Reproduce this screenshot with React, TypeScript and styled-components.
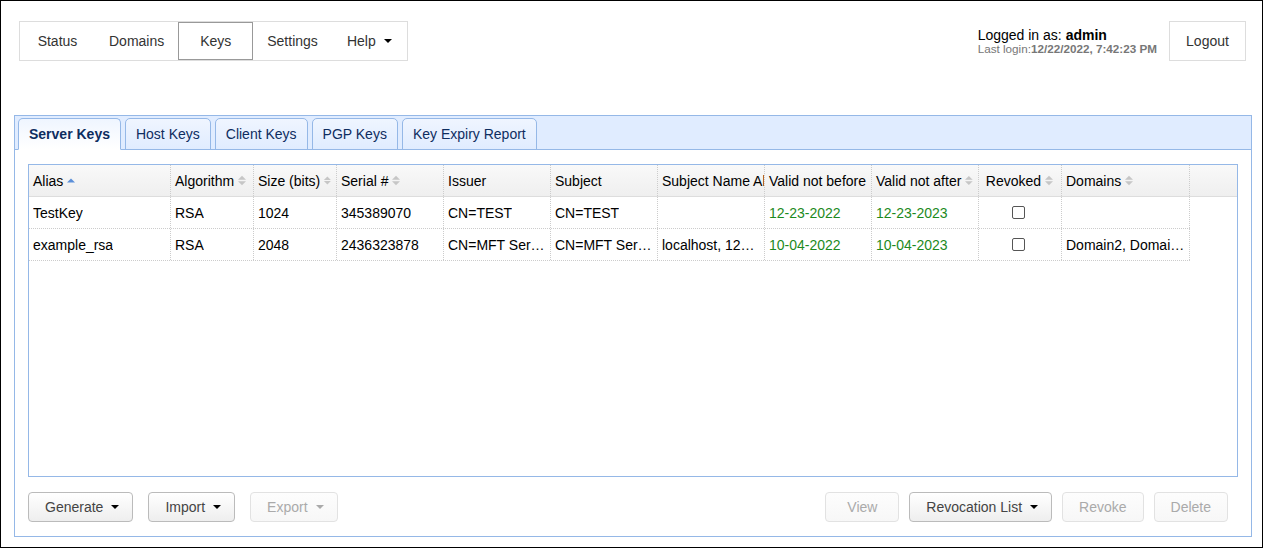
import React from "react";
import styled, { createGlobalStyle } from "styled-components";

const GlobalStyle = createGlobalStyle`
  html, body {
    margin: 0;
    padding: 0;
    background: #fff;
  }
  body {
    font-family: "Liberation Sans", Arial, sans-serif;
    font-size: 14px;
    color: #000;
  }
  * { box-sizing: border-box; }
`;

const Frame = styled.div`
  width: 1263px;
  height: 548px;
  border: 1px solid #000;
  display: flex;
  flex-direction: column;
`;

const TopBar = styled.div`
  display: flex;
  justify-content: space-between;
  align-items: center;
  padding: 20px 16px 0 18px;
  margin-bottom: 54px;
`;

const Nav = styled.nav`
  display: flex;
  height: 40px;
  border: 1px solid #ddd;
`;

const NavItem = styled.a<{ $active?: boolean }>`
  display: flex;
  align-items: center;
  justify-content: center;
  min-width: 75px;
  padding: 0 13px;
  color: #333;
  text-decoration: none;
  cursor: pointer;
  border: 1px solid ${(p) => (p.$active ? "#999" : "transparent")};
  margin: ${(p) => (p.$active ? "0" : "-1px 0")};
  height: ${(p) => (p.$active ? "38px" : "40px")};
`;

const Caret = styled.span<{ $color?: string }>`
  display: inline-block;
  width: 0;
  height: 0;
  margin-left: 8px;
  border-left: 4px solid transparent;
  border-right: 4px solid transparent;
  border-top: 4px solid ${(p) => p.$color || "#000"};
  vertical-align: middle;
`;

const UserBox = styled.div`
  display: flex;
  align-items: center;
  gap: 12px;
`;

const UserInfo = styled.div`
  display: flex;
  flex-direction: column;
  line-height: 14px;
`;

const LoggedIn = styled.div`
  font-size: 14px;
  color: #000;
  b { font-weight: bold; }
`;

const LastLogin = styled.div`
  font-size: 11.7px;
  color: #777;
  line-height: 13px;
  b { font-weight: bold; }
`;

const PlainButton = styled.button`
  height: 40px;
  width: 77px;
  border: 1px solid #ddd;
  background: #fff;
  font-family: inherit;
  font-size: 14px;
  color: #333;
  cursor: pointer;
`;

const Panel = styled.div`
  margin: 0 10px 10px 13px;
  height: 422px;
  border: 1px solid #95b8e7;
  display: flex;
  flex-direction: column;
`;

const TabStrip = styled.div`
  height: 34px;
  background: #e0ecff;
  border-bottom: 1px solid #95b8e7;
  padding: 2px 0 0 3px;
  display: flex;
  align-items: flex-start;
  gap: 4px;
`;

const Tab = styled.div<{ $active?: boolean }>`
  position: relative;
  height: 32px;
  padding: 0 10px;
  display: flex;
  align-items: center;
  border: 1px solid #95b8e7;
  border-radius: 5px 5px 0 0;
  color: #0e2d5f;
  font-weight: ${(p) => (p.$active ? "bold" : "normal")};
  background: ${(p) =>
    p.$active
      ? "linear-gradient(to bottom, #eff5ff 0, #ffffff 100%)"
      : "linear-gradient(to bottom, #eff5ff 0, #e0ecff 100%)"};
  border-bottom-color: ${(p) => (p.$active ? "#fff" : "#95b8e7")};
`;

const PanelBody = styled.div`
  flex: 1;
  background: #fff;
  padding: 14px 13px;
  display: flex;
  flex-direction: column;
`;

const GridBox = styled.div`
  height: 313px;
  border: 1px solid #95b8e7;
  overflow: hidden;
`;

const COLS = "142px 83px 83px 107px 107px 107px 107px 107px 107px 83px 128px";

const HeadRow = styled.div`
  display: grid;
  grid-template-columns: ${COLS};
  height: 32px;
  background: linear-gradient(to bottom, #f9f9f9 0, #efefef 100%);
  border-bottom: 1px solid #ddd;
`;

const HeadCell = styled.div<{ $center?: boolean }>`
  display: flex;
  align-items: center;
  justify-content: ${(p) => (p.$center ? "center" : "flex-start")};
  padding: 0 4px;
  border-right: 1px dotted #ccc;
  white-space: nowrap;
  overflow: hidden;
  color: #000;
`;

const Row = styled.div`
  display: grid;
  grid-template-columns: ${COLS};
  width: 1161px;
  height: 32px;
  border-bottom: 1px dotted #ccc;
`;

const Cell = styled.div<{ $color?: string; $center?: boolean }>`
  display: flex;
  align-items: center;
  justify-content: ${(p) => (p.$center ? "center" : "flex-start")};
  padding: 0 4px;
  border-right: 1px dotted #ccc;
  color: ${(p) => p.$color || "#000"};
  min-width: 0;
  span {
    white-space: nowrap;
    overflow: hidden;
    text-overflow: ellipsis;
  }
`;

const Check = styled.span`
  display: inline-block;
  width: 13px;
  height: 13px;
  border: 1px solid #555;
  border-radius: 2px;
  background: #fff;
  margin-left: -4px;
`;

const Toolbar = styled.div`
  margin-top: 15px;
  margin-right: 10px;
  display: flex;
  justify-content: space-between;
`;

const Group = styled.div<{ $gap: number }>`
  display: flex;
  gap: ${(p) => p.$gap}px;
`;

const Btn = styled.button<{ $disabled?: boolean; $menu?: boolean }>`
  height: 30px;
  min-width: 74px;
  padding: ${(p) => (p.$menu ? "0 13px 0 16px" : "0 16px")};
  display: flex;
  align-items: center;
  justify-content: center;
  font-family: inherit;
  font-size: 14px;
  border-radius: 4px;
  cursor: ${(p) => (p.$disabled ? "default" : "pointer")};
  color: ${(p) => (p.$disabled ? "#aaa" : "#444")};
  border: 1px solid ${(p) => (p.$disabled ? "#e2e2e2" : "#bbb")};
  background: ${(p) =>
    p.$disabled
      ? "linear-gradient(to bottom, #fdfdfd 0, #f7f7f7 100%)"
      : "linear-gradient(to bottom, #ffffff 0, #eeeeee 100%)"};
`;

function SortIcon({ dir }: { dir?: "asc" }) {
  if (dir === "asc") {
    return (
      <svg width="10" height="10" viewBox="0 0 10 10" style={{ marginLeft: 3 }}>
        <polygon points="1,6.5 5,2.5 9,6.5" fill="#5b8fd9" />
      </svg>
    );
  }
  return (
    <svg width="10" height="11" viewBox="0 0 10 11" style={{ marginLeft: 3 }}>
      <polygon points="1,4.8 5,0.8 9,4.8" fill="#c6c6c6" />
      <polygon points="1,6.2 5,10.2 9,6.2" fill="#c6c6c6" />
    </svg>
  );
}

const headers: { label: string; sort?: "asc" | "both"; center?: boolean }[] = [
  { label: "Alias", sort: "asc" },
  { label: "Algorithm", sort: "both" },
  { label: "Size (bits)", sort: "both" },
  { label: "Serial #", sort: "both" },
  { label: "Issuer" },
  { label: "Subject" },
  { label: "Subject Name Alternative" },
  { label: "Valid not before" },
  { label: "Valid not after", sort: "both" },
  { label: "Revoked", sort: "both", center: true },
  { label: "Domains", sort: "both" },
];

const rows = [
  {
    alias: "TestKey",
    algo: "RSA",
    size: "1024",
    serial: "345389070",
    issuer: "CN=TEST",
    subject: "CN=TEST",
    san: "",
    from: "12-23-2022",
    to: "12-23-2023",
    domains: "",
  },
  {
    alias: "example_rsa",
    algo: "RSA",
    size: "2048",
    serial: "2436323878",
    issuer: "CN=MFT Server, O=Example",
    subject: "CN=MFT Server, O=Example",
    san: "localhost, 127.0.0.1",
    from: "10-04-2022",
    to: "10-04-2023",
    domains: "Domain2, Domain3",
  },
];

const GREEN = "#1d8a1d";

export default function App() {
  return (
    <>
      <GlobalStyle />
      <Frame>
        <TopBar>
          <Nav>
            <NavItem>Status</NavItem>
            <NavItem>Domains</NavItem>
            <NavItem $active>Keys</NavItem>
            <NavItem>Settings</NavItem>
            <NavItem>
              Help
              <Caret />
            </NavItem>
          </Nav>
          <UserBox>
            <UserInfo>
              <LoggedIn>
                Logged in as: <b>admin</b>
              </LoggedIn>
              <LastLogin>
                Last login:<b>12/22/2022, 7:42:23 PM</b>
              </LastLogin>
            </UserInfo>
            <PlainButton>Logout</PlainButton>
          </UserBox>
        </TopBar>

        <Panel>
          <TabStrip>
            <Tab $active>Server Keys</Tab>
            <Tab>Host Keys</Tab>
            <Tab>Client Keys</Tab>
            <Tab>PGP Keys</Tab>
            <Tab>Key Expiry Report</Tab>
          </TabStrip>
          <PanelBody>
            <GridBox>
              <HeadRow>
                {headers.map((h) => (
                  <HeadCell key={h.label} $center={h.center}>
                    {h.label}
                    {h.sort === "asc" && <SortIcon dir="asc" />}
                    {h.sort === "both" && <SortIcon />}
                  </HeadCell>
                ))}
              </HeadRow>
              {rows.map((r) => (
                <Row key={r.alias}>
                  <Cell><span>{r.alias}</span></Cell>
                  <Cell><span>{r.algo}</span></Cell>
                  <Cell><span>{r.size}</span></Cell>
                  <Cell><span>{r.serial}</span></Cell>
                  <Cell><span>{r.issuer}</span></Cell>
                  <Cell><span>{r.subject}</span></Cell>
                  <Cell><span>{r.san}</span></Cell>
                  <Cell $color={GREEN}><span>{r.from}</span></Cell>
                  <Cell $color={GREEN}><span>{r.to}</span></Cell>
                  <Cell $center><Check /></Cell>
                  <Cell><span>{r.domains}</span></Cell>
                </Row>
              ))}
            </GridBox>
            <Toolbar>
              <Group $gap={15}>
                <Btn $menu>
                  Generate
                  <Caret />
                </Btn>
                <Btn $menu>
                  Import
                  <Caret />
                </Btn>
                <Btn $menu $disabled>
                  Export
                  <Caret $color="#aaa" />
                </Btn>
              </Group>
              <Group $gap={10}>
                <Btn $disabled>View</Btn>
                <Btn $menu>
                  Revocation List
                  <Caret />
                </Btn>
                <Btn $disabled>Revoke</Btn>
                <Btn $disabled>Delete</Btn>
              </Group>
            </Toolbar>
          </PanelBody>
        </Panel>
      </Frame>
    </>
  );
}
